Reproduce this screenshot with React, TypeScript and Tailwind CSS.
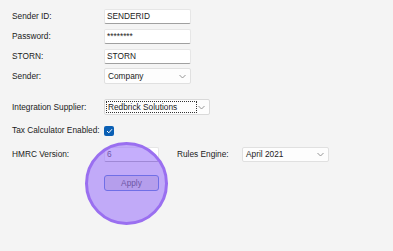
import React from "react";

const font = { fontFamily: '"Liberation Sans", Arial, sans-serif' };

function Chevron() {
  return (
    <svg width="7" height="5" viewBox="0 0 7 5" className="shrink-0">
      <path d="M0.5 1 L3.5 4 L6.5 1" fill="none" stroke="#8a8a8a" strokeWidth="0.9" />
    </svg>
  );
}

function Label({ children }: { children: React.ReactNode }) {
  return <div className="w-[92px] shrink-0 whitespace-nowrap text-[8.3px] text-[#1b1b1b] leading-none">{children}</div>;
}

function TextBox({ value, w = "w-[87px]" }: { value: string; w?: string }) {
  return (
    <div className={`${w} h-[15px] bg-white border border-[#e6e6e6] border-b-[#a0a0a0] rounded-[2px] flex items-center pl-[2px] text-[8.3px] text-[#1b1b1b] leading-none`}>
      {value}
    </div>
  );
}

export default function App() {
  return (
    <div className="relative w-[393px] h-[251px] bg-[#f4f4f4] overflow-hidden" style={font}>
      <div className="flex flex-col pl-[12px] pt-[9px]">
        <div className="flex items-center h-[15px]">
          <Label>Sender ID:</Label>
          <TextBox value="SENDERID" />
        </div>
        <div className="flex items-center h-[15px] mt-[5px]">
          <Label>Password:</Label>
          <TextBox value="********" />
        </div>
        <div className="flex items-center h-[15px] mt-[5px]">
          <Label>STORN:</Label>
          <TextBox value="STORN" />
        </div>
        <div className="flex items-center h-[16px] mt-[4px]">
          <Label>Sender:</Label>
          <div className="w-[87px] h-[16px] bg-[#fdfdfd] border border-[#e0e0e0] rounded-[2px] flex items-center justify-between pl-[3px] pr-[4px] text-[8.3px] text-[#1b1b1b] leading-none">
            <span>Company</span>
            <Chevron />
          </div>
        </div>
        <div className="flex items-center h-[16px] mt-[15px]">
          <Label>Integration Supplier:</Label>
          <div className="w-[106px] h-[16px] bg-[#fdfdfd] border border-[#d9d9d9] rounded-[2px] flex items-center justify-between pl-[1px] pr-[4px] text-[8.3px] text-[#1b1b1b] leading-none">
            <span className="h-[12px] w-[91px] border border-dotted border-[#333] flex items-center pl-[1px] whitespace-nowrap">Redbrick Solutions</span>
            <Chevron />
          </div>
        </div>
        <div className="flex items-center h-[11px] mt-[10px]">
          <Label>Tax Calculator Enabled:</Label>
          <div className="w-[10px] h-[10px] rounded-[2px] bg-[#0a5fb4] flex items-center justify-center">
            <svg width="7" height="6" viewBox="0 0 7 6">
              <path d="M1 3 L2.8 4.8 L6 1.2" fill="none" stroke="white" strokeWidth="1" />
            </svg>
          </div>
        </div>
        <div className="flex items-center h-[15px] mt-[11px]">
          <Label>HMRC Version:</Label>
          <TextBox value="6" w="w-[55px]" />
          <div className="ml-[18px] w-[65px] whitespace-nowrap text-[8.3px] text-[#1b1b1b] leading-none">Rules Engine:</div>
          <div className="w-[87px] h-[15px] bg-[#fdfdfd] border border-[#e0e0e0] rounded-[2px] flex items-center justify-between pl-[3px] pr-[4px] text-[8.3px] text-[#1b1b1b] leading-none">
            <span>April 2021</span>
            <Chevron />
          </div>
        </div>
        <div className="flex items-center h-[16px] mt-[13px]">
          <div className="w-[92px] shrink-0" />
          <div className="w-[55px] h-[16px] bg-[#d6d6d6] border border-[#2b63c9] rounded-[3px] flex items-center justify-center text-[8.3px] text-[#1b1b1b] leading-none">
            Apply
          </div>
        </div>
      </div>
      <div className="absolute left-[85px] top-[142px] w-[83px] h-[83px] rounded-full bg-[rgba(158,120,250,0.6)] border-[3px] border-[#9a6ff0]" />
    </div>
  );
}
